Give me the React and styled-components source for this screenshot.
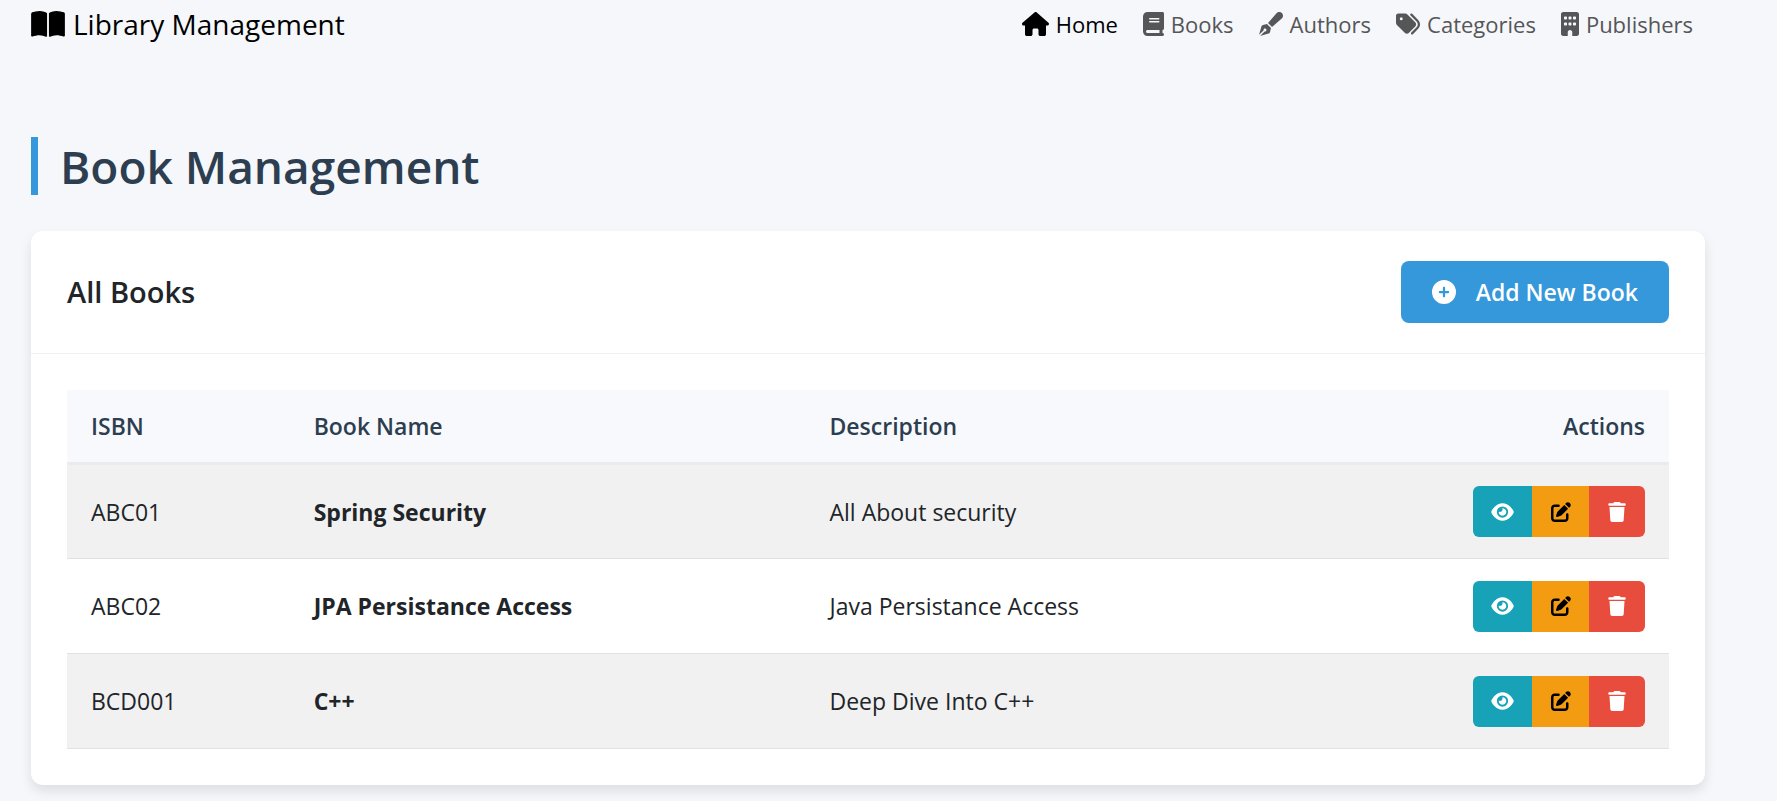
import React from 'react';
import styled, { createGlobalStyle } from 'styled-components';
import {
  FaBookOpen,
  FaHouse,
  FaBook,
  FaPenFancy,
  FaTags,
  FaBuilding,
  FaCirclePlus,
  FaEye,
  FaPenToSquare,
  FaTrash,
} from 'react-icons/fa6';

const GlobalStyle = createGlobalStyle`
  *, *::before, *::after { box-sizing: border-box; }
  body {
    margin: 0;
    background: #f5f7fb;
    color: #212529;
    font-family: "Segoe UI", "Open Sans", "Noto Sans", sans-serif;
    font-size: 23px;
    line-height: 36px;
  }
`;

const Page = styled.div`
  padding: 0 72px 16px 31px;
`;

const Navbar = styled.header`
  display: flex;
  align-items: center;
  justify-content: space-between;
  height: 48px;
`;

const Brand = styled.a`
  display: flex;
  align-items: center;
  gap: 8px;
  color: #000;
  font-size: 28px;
  text-decoration: none;

  svg {
    width: 34px;
    height: 30px;
  }
`;

const Nav = styled.nav`
  display: flex;
  gap: 25px;
  padding-right: 12px;
`;

const NavLink = styled.a`
  display: flex;
  align-items: center;
  gap: 7px;
  color: ${(p) => (p.$active ? '#000' : '#555658')};
  font-size: 22px;
  text-decoration: none;

  svg {
    height: 24px;
    width: ${(p) => p.$iconWidth}px;
  }
`;

const PageTitle = styled.h1`
  margin: 89px 0 36px;
  padding-left: 22px;
  border-left: 7px solid #3498db;
  color: #2c3e50;
  font-size: 46px;
  font-weight: 600;
  line-height: 58px;
`;

const Card = styled.section`
  background: #fff;
  border-radius: 12px;
  box-shadow: 0 6px 12px rgba(0, 0, 0, 0.1);
`;

const CardHeader = styled.div`
  display: flex;
  align-items: center;
  justify-content: space-between;
  padding: 30px 36px;
  border-bottom: 1px solid #f0f0f0;
`;

const CardTitle = styled.h2`
  margin: 0;
  font-size: 29px;
  font-weight: 600;
`;

const AddButton = styled.button`
  display: flex;
  align-items: center;
  gap: 20px;
  height: 62px;
  padding: 0 31px;
  border: 0;
  border-radius: 8px;
  background: #3498db;
  color: #fff;
  font: inherit;
  font-weight: 600;

  svg {
    width: 24px;
    height: 24px;
  }
`;

const CardBody = styled.div`
  padding: 36px;
`;

const Table = styled.table`
  width: 100%;
  border-collapse: separate;
  border-spacing: 0;
  table-layout: fixed;
`;

const Column = styled.col`
  width: ${(p) => p.$width};
`;

const HeadCell = styled.th`
  height: 75px;
  padding: 0 24px;
  border-bottom: 3px solid #e9ecef;
  background: #f8f9fc;
  color: #2c3e50;
  font-weight: 600;
  text-align: ${(p) => (p.$end ? 'right' : 'left')};
`;

const Row = styled.tr`
  &:nth-child(odd) {
    background: #f1f1f1;
  }

  &:first-child > td {
    height: 94px;
  }
`;

const Cell = styled.td`
  height: 95px;
  padding: 0 24px;
  border-bottom: 1px solid #dee2e6;
`;

const Actions = styled.div`
  display: flex;
  width: max-content;
  margin-left: auto;
  overflow: hidden;
  border-radius: 6px;
`;

const ActionButton = styled.button`
  display: flex;
  align-items: center;
  justify-content: center;
  width: ${(p) => p.$width}px;
  height: 51px;
  padding: 0;
  border: 0;
  background: ${(p) => p.$bg};
  color: ${(p) => p.$color || '#fff'};

  svg {
    height: 20px;
    width: ${(p) => p.$iconWidth}px;
  }
`;

const links = [
  { label: 'Home', Icon: FaHouse, iconWidth: 27, active: true },
  { label: 'Books', Icon: FaBook, iconWidth: 21 },
  { label: 'Authors', Icon: FaPenFancy, iconWidth: 24 },
  { label: 'Categories', Icon: FaTags, iconWidth: 24 },
  { label: 'Publishers', Icon: FaBuilding, iconWidth: 18 },
];

const actions = [
  { label: 'View', Icon: FaEye, width: 59, iconWidth: 23, bg: '#17a2b8' },
  { label: 'Edit', Icon: FaPenToSquare, width: 57, iconWidth: 20, bg: '#f39c12', color: '#000' },
  { label: 'Delete', Icon: FaTrash, width: 56, iconWidth: 18, bg: '#e74c3c' },
];

const books = [
  { isbn: 'ABC01', name: 'Spring Security', description: 'All About security' },
  { isbn: 'ABC02', name: 'JPA Persistance Access', description: 'Java Persistance Access' },
  { isbn: 'BCD001', name: 'C++', description: 'Deep Dive Into C++' },
];

export default function App() {
  return (
    <>
      <GlobalStyle />
      <Page>
        <Navbar>
          <Brand href="#">
            <FaBookOpen />
            Library Management
          </Brand>
          <Nav>
            {links.map(({ label, Icon, iconWidth, active }) => (
              <NavLink key={label} href="#" $active={active} $iconWidth={iconWidth}>
                <Icon />
                {label}
              </NavLink>
            ))}
          </Nav>
        </Navbar>
        <main>
          <PageTitle>Book Management</PageTitle>
          <Card>
            <CardHeader>
              <CardTitle>All Books</CardTitle>
              <AddButton type="button">
                <FaCirclePlus />
                Add New Book
              </AddButton>
            </CardHeader>
            <CardBody>
              <Table>
                <colgroup>
                  <Column $width="13.9%" />
                  <Column $width="32.2%" />
                  <Column $width="33%" />
                  <Column />
                </colgroup>
                <thead>
                  <tr>
                    <HeadCell>ISBN</HeadCell>
                    <HeadCell>Book Name</HeadCell>
                    <HeadCell>Description</HeadCell>
                    <HeadCell $end>Actions</HeadCell>
                  </tr>
                </thead>
                <tbody>
                  {books.map((book) => (
                    <Row key={book.isbn}>
                      <Cell>{book.isbn}</Cell>
                      <Cell>
                        <strong>{book.name}</strong>
                      </Cell>
                      <Cell>{book.description}</Cell>
                      <Cell>
                        <Actions>
                          {actions.map(({ label, Icon, width, iconWidth, bg, color }) => (
                            <ActionButton
                              key={label}
                              type="button"
                              aria-label={`${label} ${book.name}`}
                              $width={width}
                              $iconWidth={iconWidth}
                              $bg={bg}
                              $color={color}
                            >
                              <Icon />
                            </ActionButton>
                          ))}
                        </Actions>
                      </Cell>
                    </Row>
                  ))}
                </tbody>
              </Table>
            </CardBody>
          </Card>
        </main>
      </Page>
    </>
  );
}
